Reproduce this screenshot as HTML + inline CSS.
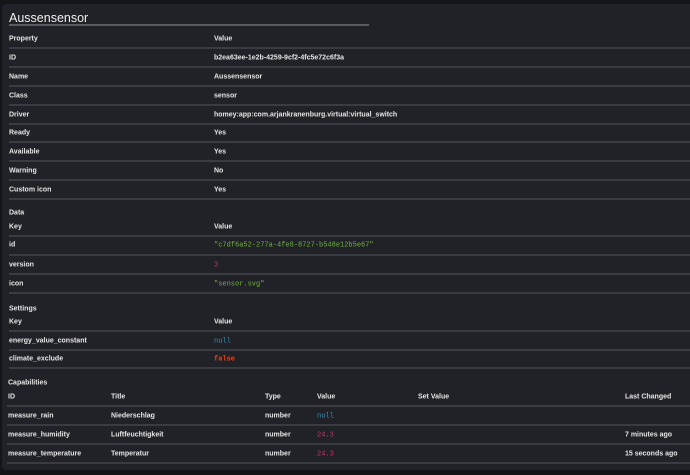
<!DOCTYPE html>
<html><head><meta charset="utf-8"><style>
*{margin:0;padding:0;box-sizing:border-box}
body{width:690px;height:475px;background:#141519;overflow:hidden;position:relative;font-family:"Liberation Sans",sans-serif}
.card{position:absolute;left:2px;top:4px;width:700px;height:466px;background:#212227;border-radius:4px}
.t{position:absolute;font-size:7px;font-weight:bold;color:#e6e6e6;line-height:10px;white-space:nowrap;transform:translateY(-3.5px)}
.m{font-family:"Liberation Mono",monospace;font-weight:normal}
.l{position:absolute;left:9px;right:0;height:2px;background:#3b3c41}
.h{position:absolute;left:9px;top:11px;font-size:12.5px;color:#f0f0f0;line-height:15px}
.hl{position:absolute;left:9px;top:24px;width:360px;height:2px;background:#5a5b60}
</style></head><body>
<div class="card"></div>
<div class="h">Aussensensor</div><div class="hl"></div>

<div class="t" style="left:9px;top:38px">Property</div><div class="t" style="left:214px;top:38px">Value</div>
<div class="l" style="top:47px"></div>
<div class="t" style="left:9px;top:57px">ID</div><div class="t" style="left:214px;top:57px">b2ea63ee-1e2b-4259-9cf2-4fc5e72c6f3a</div>
<div class="l" style="top:66px"></div>
<div class="t" style="left:9px;top:76px">Name</div><div class="t" style="left:214px;top:76px">Aussensensor</div>
<div class="l" style="top:85px"></div>
<div class="t" style="left:9px;top:95px">Class</div><div class="t" style="left:214px;top:95px">sensor</div>
<div class="l" style="top:104px"></div>
<div class="t" style="left:9px;top:114px">Driver</div><div class="t" style="left:214px;top:114px">homey:app:com.arjankranenburg.virtual:virtual_switch</div>
<div class="l" style="top:123px"></div>
<div class="t" style="left:9px;top:132px">Ready</div><div class="t" style="left:214px;top:132px">Yes</div>
<div class="l" style="top:141px"></div>
<div class="t" style="left:9px;top:151px">Available</div><div class="t" style="left:214px;top:151px">Yes</div>
<div class="l" style="top:160px"></div>
<div class="t" style="left:9px;top:170px">Warning</div><div class="t" style="left:214px;top:170px">No</div>
<div class="l" style="top:179px"></div>
<div class="t" style="left:9px;top:189px">Custom icon</div><div class="t" style="left:214px;top:189px">Yes</div>
<div class="l" style="top:198px"></div>

<div class="t" style="left:9px;top:212px">Data</div>
<div class="t" style="left:9px;top:226px">Key</div><div class="t" style="left:214px;top:226px">Value</div>
<div class="l" style="top:235px"></div>
<div class="t" style="left:9px;top:244px">id</div><div class="t m" style="left:214px;top:244px;color:#6fb33c">"c7df6a52-277a-4fe8-8727-b548e12b5e67"</div>
<div class="l" style="top:254px"></div>
<div class="t" style="left:9px;top:264px">version</div><div class="t m" style="left:214px;top:264px;color:#c4366a">3</div>
<div class="l" style="top:273px"></div>
<div class="t" style="left:9px;top:283px">icon</div><div class="t m" style="left:214px;top:283px;color:#6fb33c">"sensor.svg"</div>
<div class="l" style="top:292px"></div>

<div class="t" style="left:9px;top:308px">Settings</div>
<div class="t" style="left:9px;top:321px">Key</div><div class="t" style="left:214px;top:321px">Value</div>
<div class="l" style="top:330px"></div>
<div class="t" style="left:9px;top:340px">energy_value_constant</div><div class="t m" style="left:214px;top:340px;color:#3b8db5">null</div>
<div class="l" style="top:349px"></div>
<div class="t" style="left:9px;top:358px">climate_exclude</div><div class="t m" style="left:214px;top:358px;color:#e8401c;font-weight:bold">false</div>
<div class="l" style="top:367px"></div>

<div class="t" style="left:8px;top:382px">Capabilities</div>
<div class="t" style="left:8px;top:396px">ID</div><div class="t" style="left:111px;top:396px">Title</div><div class="t" style="left:265px;top:396px">Type</div><div class="t" style="left:317px;top:396px">Value</div><div class="t" style="left:418px;top:396px">Set Value</div><div class="t" style="left:625px;top:396px">Last Changed</div>
<div class="l" style="top:405px;left:7px"></div>
<div class="t" style="left:8px;top:415px">measure_rain</div><div class="t" style="left:111px;top:415px">Niederschlag</div><div class="t" style="left:265px;top:415px">number</div><div class="t m" style="left:317px;top:415px;color:#3b8db5">null</div>
<div class="l" style="top:424px;left:7px"></div>
<div class="t" style="left:8px;top:434px">measure_humidity</div><div class="t" style="left:111px;top:434px">Luftfeuchtigkeit</div><div class="t" style="left:265px;top:434px">number</div><div class="t m" style="left:317px;top:434px;color:#c4366a">24.3</div><div class="t" style="left:625px;top:434px">7 minutes ago</div>
<div class="l" style="top:443px;left:7px"></div>
<div class="t" style="left:8px;top:453px">measure_temperature</div><div class="t" style="left:111px;top:453px">Temperatur</div><div class="t" style="left:265px;top:453px">number</div><div class="t m" style="left:317px;top:453px;color:#c4366a">24.3</div><div class="t" style="left:625px;top:453px">15 seconds ago</div>
<div class="l" style="top:462px;left:7px"></div>
</body></html>
